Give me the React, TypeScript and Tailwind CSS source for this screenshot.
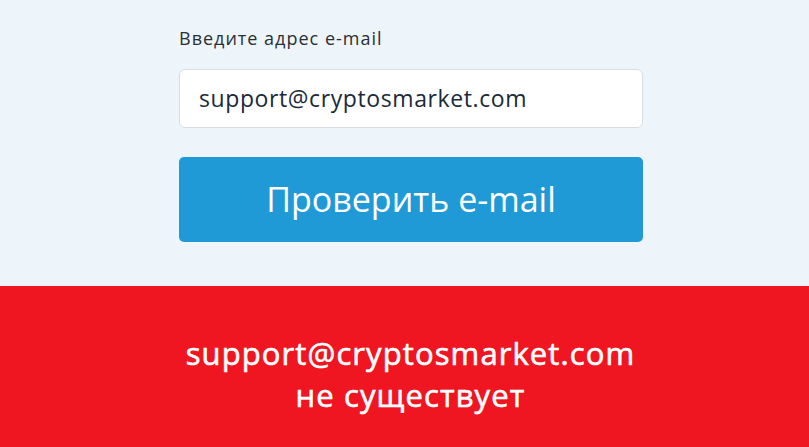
const App = () => {
  return (
    <div className="w-[809px] h-[447px] flex flex-col bg-[#eef5fa] font-['Open_Sans',sans-serif] overflow-hidden">
      <div className="h-[286px] pt-[26px]">
        <div className="ml-[179px] w-[464px] flex flex-col">
          <label className="text-[18px] leading-[24px] tracking-[1px] text-[#2a2f36]">
            Введите адрес e-mail
          </label>
          <div className="mt-[19px] h-[59px] bg-white border border-[#dadde0] rounded-[6px] flex items-center px-[19px]">
            <span className="text-[23px] tracking-[0.6px] text-[#1b2a3a]">support@cryptosmarket.com</span>
          </div>
          <button className="mt-[29px] h-[85px] bg-[#1f9ad6] rounded-[5px] text-white text-[34px] flex items-center justify-center">
            Проверить e-mail
          </button>
        </div>
      </div>
      {/* regular weight looks too thin, bold too heavy: thicken with a light stroke */}
      <div className="flex-1 bg-[#ef1622] flex flex-col items-center pt-[46px] pl-[12px] text-white text-[31px] leading-[42px] tracking-[1.1px] [-webkit-text-stroke:0.6px_white]">
        <span>support@cryptosmarket.com</span>
        <span>не существует</span>
      </div>
    </div>
  )
}

export default App
